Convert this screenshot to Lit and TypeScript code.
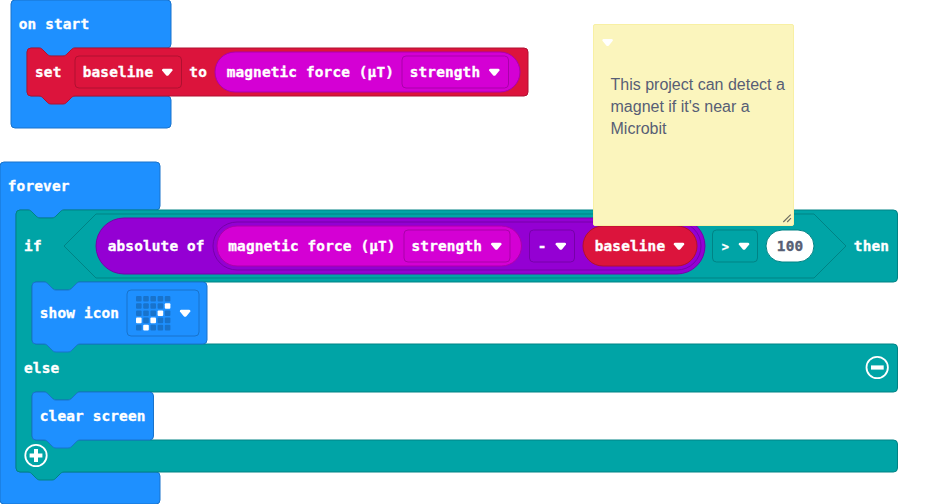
import { LitElement, html, svg, css } from "lit";
import { customElement } from "lit/decorators.js";

type Tone = "basic" | "variable" | "input" | "logic" | "math";

// Connector dent, 36 wide and 8 deep, drawn left to right or right to left.
const NOTCH = "c2 0 3 1 4 2l4 4c1 1 2 2 4 2h12c2 0 3 -1 4 -2l4 -4c1 -1 2 -2 4 -2";
const NOTCH_BACK = "c-2 0 -3 1 -4 2l-4 4c-1 1 -2 2 -4 2h-12c-2 0 -3 -1 -4 -2l-4 -4c-1 -1 -2 -2 -4 -2";

// Statement block with a dent at the top and a tab at the bottom.
const statementPath = (x: number, y: number, w: number, h: number) =>
  `M${x} ${y + 4}a4 4 0 0 1 4 -4h8${NOTCH}H${x + w - 4}a4 4 0 0 1 4 4v${h - 8}a4 4 0 0 1 -4 4H${x + 48}${NOTCH_BACK}h-8a4 4 0 0 1 -4 -4z`;

// Opening for nested statements, cut into the right side of a container.
const mouth = (x: number, right: number, bottom: number) =>
  `a4 4 0 0 1 -4 4H${x + 64}${NOTCH_BACK}h-8a4 4 0 0 0 -4 4V${bottom - 4}a4 4 0 0 0 4 4H${right - 4}a4 4 0 0 1 4 4`;

// Event container with no connectors outside.
const hatPath = (x: number, y: number, w: number, innerBottom: number, bottom: number) =>
  `M${x} ${y + 4}a4 4 0 0 1 4 -4h${w - 8}a4 4 0 0 1 4 4v40${mouth(x, x + w, innerBottom)}V${bottom - 4}a4 4 0 0 1 -4 4H${x + 4}a4 4 0 0 1 -4 -4z`;

const block = (tone: Tone, d: string) => svg`<path class="block ${tone}" d=${d}></path>`;

const pill = (tone: string, x: number, y: number, w: number, h: number) =>
  svg`<rect class="block ${tone}" x=${x} y=${y} width=${w} height=${h} rx=${h / 2}></rect>`;

const field = (tone: Tone, x: number, y: number, w: number, h = 32) =>
  svg`<rect class="block ${tone}" x=${x} y=${y} width=${w} height=${h} rx="4"></rect>`;

const label = (text: string, x: number, y: number, extra = "") =>
  svg`<text class="label ${extra}" x=${x} y=${y} textLength=${text.length * 8.8}>${text}</text>`;

const caret = (x: number, y: number) =>
  svg`<path class="white" transform="translate(${x} ${y})" d="M1.2 -.2H9.4Q10.9 0 10.5 1.6L6.6 6.2Q5.3 7.4 4 6.2L.1 1.6Q-.3 0 1.2 -.2z"></path>`;

const TICK = ["00000", "00001", "00010", "10100", "01000"];

const leds = (x: number, y: number) =>
  TICK.map((row, r) =>
    [...row].map(
      (on, c) => svg`<rect class=${on === "1" ? "white" : "led"} x=${x + c * 7.2} y=${y + r * 7.2} width="5.6" height="5.6" rx="1"></rect>`
    )
  );

@customElement("app-root")
export class AppRoot extends LitElement {
  static styles = css`
    :host { display: block; width: 949px; height: 504px; overflow: hidden; background: #fff; }
    .workspace { display: block; width: 949px; height: 504px; }
    .block { stroke-width: 1; }
    .basic { fill: #1e90ff; stroke: #1873cc; }
    .variable { fill: #dc143c; stroke: #b01030; }
    .input { fill: #d400d4; stroke: #aa00aa; }
    .logic { fill: #00a4a6; stroke: #008385; }
    .math { fill: #9400d3; stroke: #7600a9; }
    .number { fill: #fff; stroke: #008385; }
    .label {
      font: bold 14.4px "DejaVu Sans Mono", monospace;
      fill: #fff;
      stroke: #fff;
      stroke-width: 0.35;
      white-space: pre;
    }
    .label.dark { fill: #575e75; stroke: #575e75; }
    .label.small { font-size: 12px; }
    .white { fill: #fff; }
    .led { fill: #1873cc; }
    .ring { fill: none; stroke: #fff; stroke-width: 1.8; }
    .note { fill: #fbf5bd; stroke: #f8f0a4; }
    .note-text { font: 16px "Liberation Sans", Arial, sans-serif; fill: #575e75; }
    .grip { fill: none; stroke: #6b6b60; stroke-width: 1.1; }
  `;

  private onStart() {
    return svg`<g>
      ${block("basic", hatPath(11, 0, 160, 96, 128))}
      ${label("on start", 18.7, 29)}
      ${block("variable", statementPath(27, 48, 501, 48))}
      ${label("set", 35, 77)}
      ${field("variable", 75, 56, 106.5)}
      ${label("baseline", 82.7, 77)}
      ${caret(162, 69)}
      ${label("to", 189.2, 77)}
      ${pill("input", 215, 52, 305, 40)}
      ${label("magnetic force (μT)", 226.7, 77)}
      ${field("input", 402, 56, 106.5)}
      ${label("strength", 409.7, 77)}
      ${caret(489, 69)}
    </g>`;
  }

  private condition() {
    return svg`<g>
      <path class="block logic" d="M96 214H814L846 246L814 278H96L64 246z"></path>
      ${pill("math", 96, 218, 609, 56)}
      ${label("absolute of", 107.7, 251)}
      ${pill("math", 213, 222, 488, 48)}
      ${pill("input", 217, 226, 304.5, 40)}
      ${label("magnetic force (μT)", 228.3, 251)}
      ${field("input", 404, 230, 106)}
      ${label("strength", 411.5, 251)}
      ${caret(491, 243)}
      ${field("math", 529.5, 230, 45)}
      ${label("-", 537.8, 251)}
      ${caret(555.5, 243)}
      ${pill("variable", 583, 226, 114, 40)}
      ${label("baseline", 594.7, 251)}
      ${caret(673.7, 243)}
      ${field("logic", 712.5, 230, 45)}
      ${label(">", 721.8, 250.6, "small")}
      ${caret(738.7, 243)}
      ${pill("number", 766, 230, 48, 32)}
      ${label("100", 776.8, 251, "dark")}
    </g>`;
  }

  private forever() {
    const ifElse =
      `M16 214a4 4 0 0 1 4 -4h8${NOTCH}H893.5a4 4 0 0 1 4 4V278${mouth(16, 897.5, 344)}V388` +
      `${mouth(16, 897.5, 440)}V468a4 4 0 0 1 -4 4H64${NOTCH_BACK}h-8a4 4 0 0 1 -4 -4z`;
    return svg`<g>
      ${block("basic", hatPath(0, 162, 160, 472, 504))}
      ${label("forever", 7.8, 191)}
      ${block("logic", ifElse)}
      ${label("if", 24, 251)}
      ${this.condition()}
      ${label("then", 853.8, 251)}
      ${block("basic", statementPath(32, 282, 175, 62))}
      ${label("show icon", 39.8, 318)}
      ${field("basic", 127, 290, 72, 46)}
      ${leds(136, 296)}
      ${caret(179.8, 310)}
      ${label("else", 24, 373)}
      <circle class="ring" cx="877.2" cy="367.5" r="10.7"></circle>
      <path class="white" d="M871 365.4h12.7v4.2H871z"></path>
      ${block("basic", statementPath(32, 392, 121.5, 48))}
      ${label("clear screen", 39.8, 421)}
      <circle class="ring" cx="36" cy="455.5" r="10.7"></circle>
      <path class="white" d="M34 449h4v4.5h4.4v4H38v4.5h-4v-4.5h-4.4v-4H34z"></path>
    </g>`;
  }

  private note() {
    return svg`<g>
      <rect class="note" x="593.5" y="24.5" width="200" height="201" rx="1.5"></rect>
      ${caret(602.3, 39.2)}
      <text class="note-text" x="610.5" y="90">This project can detect a</text>
      <text class="note-text" x="610.5" y="112">magnet if it's near a</text>
      <text class="note-text" x="610.5" y="134">Microbit</text>
      <path class="grip" d="M783.3 222l7.4 -7.4M787.2 222l3.8 -3.8"></path>
    </g>`;
  }

  render() {
    return html`<svg class="workspace" viewBox="0 0 949 504">
      ${this.onStart()} ${this.forever()} ${this.note()}
    </svg>`;
  }
}
